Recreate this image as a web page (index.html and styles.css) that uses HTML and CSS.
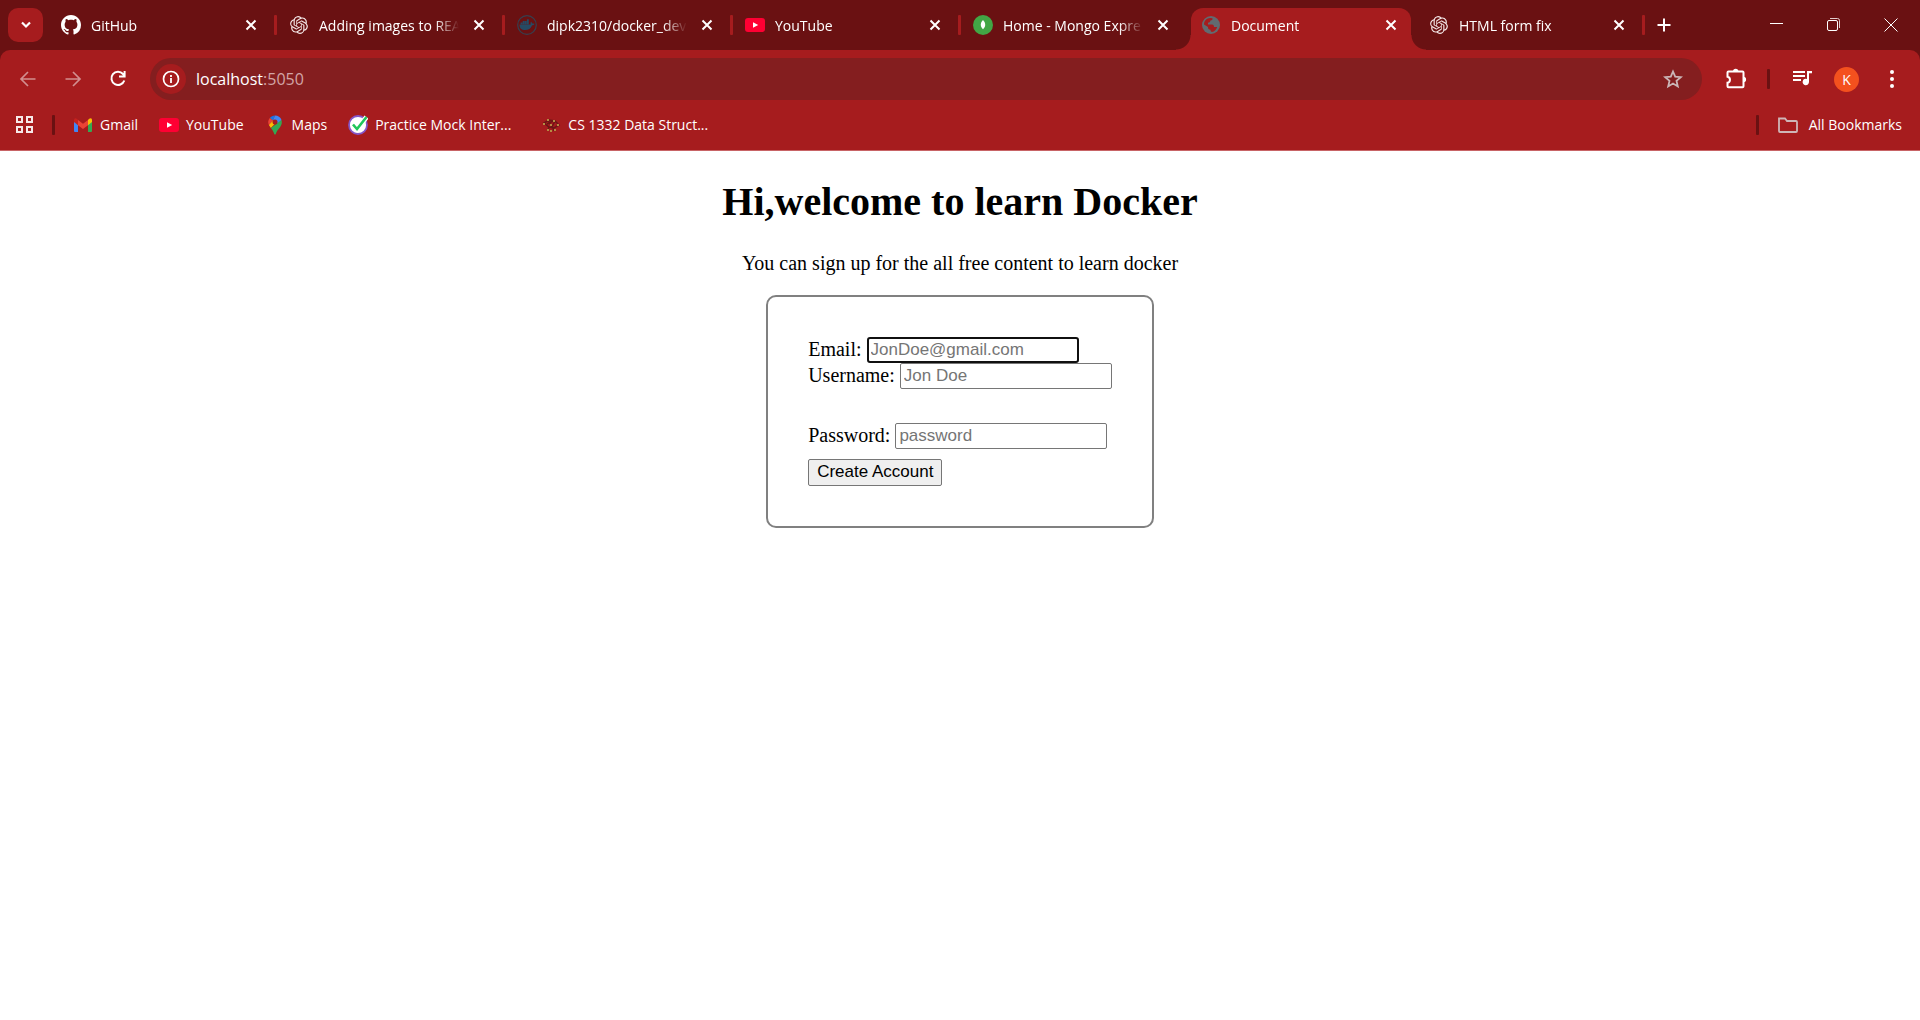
FILE: index.html
```html
<!DOCTYPE html>
<html lang="en">
<head>
<meta charset="utf-8">
<title>Document</title>
<link rel="stylesheet" href="styles.css">
</head>
<body>
<svg class="sprite" aria-hidden="true">
  <symbol id="close" viewBox="0 0 20 20"><path d="M5.500 5.500l9 9M14.500 5.500l-9 9" stroke="#fff" stroke-width="2"/></symbol>
  <symbol id="openai" viewBox="0 0 24 24"><path fill="#f3e6e6" d="M22.2819 9.8211a5.9847 5.9847 0 0 0-.5157-4.9108 6.0462 6.0462 0 0 0-6.5098-2.9A6.0651 6.0651 0 0 0 4.9807 4.1818a5.9847 5.9847 0 0 0-3.9977 2.9 6.0462 6.0462 0 0 0 .7427 7.0966 5.98 5.98 0 0 0 .511 4.9107 6.051 6.051 0 0 0 6.5146 2.9001A5.9847 5.9847 0 0 0 13.2599 24a6.0557 6.0557 0 0 0 5.7718-4.2058 5.9894 5.9894 0 0 0 3.9977-2.9001 6.0557 6.0557 0 0 0-.7475-7.0729zm-9.022 12.6081a4.4755 4.4755 0 0 1-2.8764-1.0408l.1419-.0804 4.7783-2.7582a.7948.7948 0 0 0 .3927-.6813v-6.7369l2.02 1.1686a.071.071 0 0 1 .038.052v5.5826a4.504 4.504 0 0 1-4.4945 4.4944zm-9.6607-4.1254a4.4708 4.4708 0 0 1-.5346-3.0137l.142.0852 4.783 2.7582a.7712.7712 0 0 0 .7806 0l5.8428-3.3685v2.3324a.0804.0804 0 0 1-.0332.0615L9.74 19.9502a4.4992 4.4992 0 0 1-6.1408-1.6464zM2.3408 7.8956a4.485 4.485 0 0 1 2.3655-1.9728V11.6a.7664.7664 0 0 0 .3879.6765l5.8144 3.3543-2.0201 1.1685a.0757.0757 0 0 1-.071 0l-4.8303-2.7865A4.504 4.504 0 0 1 2.3408 7.872zm16.5963 3.8558L13.1038 8.364 15.1192 7.2a.0757.0757 0 0 1 .071 0l4.8303 2.7913a4.4944 4.4944 0 0 1-.6765 8.1042v-5.6772a.79.79 0 0 0-.407-.667zm2.0107-3.0231l-.142-.0852-4.7735-2.7818a.7759.7759 0 0 0-.7854 0L9.409 9.2297V6.8974a.0662.0662 0 0 1 .0284-.0615l4.8303-2.7866a4.4992 4.4992 0 0 1 6.6802 4.66zM8.3065 12.863l-2.02-1.1638a.0804.0804 0 0 1-.038-.0567V6.0742a4.4992 4.4992 0 0 1 7.3757-3.4537l-.142.0805L8.704 5.459a.7948.7948 0 0 0-.3927.6813zm1.0976-2.3654l2.602-1.4998 2.6069 1.4998v2.9994l-2.5974 1.4997-2.6067-1.4997Z"/></symbol>
  <symbol id="youtube" viewBox="0 0 20 20"><rect y="3" width="20" height="14" rx="3" fill="#ff0033"/><path d="M8 7.200l5.200 2.800L8 12.800z" fill="#fff"/></symbol>
</svg>

<header class="browser">
  <div class="strip">
    <button class="tab-search" aria-label="Search tabs"><svg width="20" height="20" viewBox="0 0 20 20"><path d="M6 7.500l4 4 4-4" fill="none" stroke="#fff" stroke-width="2.200"/></svg></button>
    <div class="tabs">
      <div class="tab">
        <svg class="icon" viewBox="0 0 16 16"><path fill="#fff" d="M8 0C3.580 0 0 3.580 0 8c0 3.540 2.290 6.530 5.470 7.590.4.070.550-.170.550-.380 0-.190-.010-.820-.010-1.490-2.010.370-2.530-.490-2.690-.940-.090-.230-.480-.940-.820-1.130-.280-.150-.680-.520-.010-.530.630-.010 1.080.580 1.230.820.720 1.210 1.870.870 2.330.660.070-.520.280-.870.510-1.070-1.780-.2-3.640-.890-3.640-3.950 0-.870.310-1.590.820-2.150-.080-.2-.360-1.020.080-2.120 0 0 .670-.210 2.200.820.640-.180 1.320-.270 2-.270s1.360.090 2 .270c1.530-1.040 2.200-.820 2.200-.820.440 1.100.160 1.920.080 2.120.510.560.820 1.270.820 2.150 0 3.070-1.870 3.750-3.650 3.950.290.250.540.730.540 1.480 0 1.070-.010 1.930-.010 2.200 0 .210.150.460.550.380A8.010 8.010 0 0 0 16 8c0-4.420-3.580-8-8-8z"/></svg>
        <span class="title">GitHub</span>
        <button class="tab-close" aria-label="Close GitHub"><svg class="icon"><use href="#close"/></svg></button>
      </div>
      <span class="tab-sep"></span>
      <div class="tab">
        <svg class="icon" viewBox="-1.500 -1.500 27 27"><use href="#openai" width="24" height="24"/></svg>
        <span class="title">Adding images to REA</span>
        <button class="tab-close" aria-label="Close Adding images"><svg class="icon"><use href="#close"/></svg></button>
      </div>
      <span class="tab-sep"></span>
      <div class="tab">
        <svg class="icon" viewBox="0 0 20 20"><circle cx="10" cy="10" r="9.300" fill="none" stroke="#36404f" stroke-width="1.200"/><path fill="#264a64" d="M2.500 9.500h11.300c-.5-1.200-.3-2 .3-2.700.8.600 1 1.200 1 1.800.9-.1 1.700 0 2.400.4-.5.900-1.300 1.200-2.400 1.200-1.300 3.300-3.600 4.900-7 4.900-3.600 0-5.600-1.800-5.600-5.600zM3.600 7.600h1.900v1.600H3.600zm2.100 0h1.900v1.600H5.700zm2.100 0h1.900v1.600H7.800zm2.100 0h1.900v1.600H9.900zM5.700 5.900h1.900v1.500H5.700zm2.100 0h1.900v1.500H7.800zm2.100-1.700h1.900v3.200H9.900z"/></svg>
        <span class="title">dipk2310/docker_dev</span>
        <button class="tab-close" aria-label="Close docker_dev"><svg class="icon"><use href="#close"/></svg></button>
      </div>
      <span class="tab-sep"></span>
      <div class="tab">
        <svg class="icon"><use href="#youtube"/></svg>
        <span class="title">YouTube</span>
        <button class="tab-close" aria-label="Close YouTube"><svg class="icon"><use href="#close"/></svg></button>
      </div>
      <span class="tab-sep"></span>
      <div class="tab">
        <svg class="icon" viewBox="0 0 20 20"><circle cx="10" cy="10" r="10" fill="#42a645"/><path fill="#fff" d="M10 5c1.500 1.600 2.200 3 2.200 4.700 0 2-.9 3.300-2.200 4.600-1.300-1.300-2.200-2.600-2.200-4.600C7.800 8 8.500 6.600 10 5z"/></svg>
        <span class="title">Home - Mongo Expre</span>
        <button class="tab-close" aria-label="Close Mongo Express"><svg class="icon"><use href="#close"/></svg></button>
      </div>
      <span class="tab-sep hidden"></span>
      <div class="tab active">
        <svg class="icon" viewBox="0 0 20 20"><circle cx="10" cy="10" r="9" fill="#626a70"/><path fill="#a61c1e" d="M3 9.500C3 5.500 6 3.200 9 3l2.500.2c.2 1.500-.5 2.100-2 2.300-.4 1.700-1 2.200-2.500 2.200V9.500h4c1.500 0 2 1 2 2.500h3.200c-.7 2.700-2.700 4.500-5.200 5-1-.2-1.500-1-1.500-2.300-2 0-2.500-1-2.500-2.700z"/></svg>
        <span class="title">Document</span>
        <button class="tab-close" aria-label="Close Document"><svg class="icon"><use href="#close"/></svg></button>
      </div>
      <span class="tab-sep hidden"></span>
      <div class="tab">
        <svg class="icon" viewBox="-1.500 -1.500 27 27"><use href="#openai" width="24" height="24"/></svg>
        <span class="title">HTML form fix</span>
        <button class="tab-close" aria-label="Close HTML form fix"><svg class="icon"><use href="#close"/></svg></button>
      </div>
      <span class="tab-sep"></span>
    </div>
    <button class="new-tab" aria-label="New tab"><svg width="20" height="20" viewBox="0 0 20 20"><path d="M10 3.500v13M3.500 10h13" stroke="#fff" stroke-width="2"/></svg></button>
    <div class="window-buttons">
      <button aria-label="Minimize"><svg class="icon" viewBox="0 0 20 20"><path d="M3 8.500h13" stroke="#fff"/></svg></button>
      <button aria-label="Restore"><svg class="icon" viewBox="0 0 20 20"><rect x="3.500" y="5.500" width="10" height="10" rx="1.500" fill="none" stroke="#fff"/><path d="M6 3.500h7.500a2 2 0 0 1 2 2V13" fill="none" stroke="#e3cccc"/></svg></button>
      <button aria-label="Close window"><svg class="icon" viewBox="0 0 20 20"><path d="M3.500 3.500l13 13M16.500 3.500l-13 13" stroke="#fff"/></svg></button>
    </div>
  </div>

  <div class="panel">
    <div class="toolbar">
      <div class="nav">
        <button aria-label="Back"><svg class="icon" viewBox="0 0 20 20"><path d="M17.500 10H3.500M10 3L3 10l7 7" fill="none" stroke="#d28e8f" stroke-width="1.700"/></svg></button>
        <button aria-label="Forward"><svg class="icon" viewBox="0 0 20 20"><path d="M2.500 10h14M10 3l7 7-7 7" fill="none" stroke="#d28e8f" stroke-width="1.700"/></svg></button>
        <button aria-label="Reload"><svg class="icon" viewBox="0 0 20 20"><path d="M16.300 11.500A6.600 6.600 0 1 1 15 5l1.500 1.800M16.600 2v5.600H11" fill="none" stroke="#fff" stroke-width="2"/></svg></button>
      </div>
      <div class="omnibox">
        <button class="site-info" aria-label="Site information"><svg class="icon" viewBox="0 0 20 20"><circle cx="10" cy="10" r="7.500" fill="none" stroke="#fff" stroke-width="1.700"/><path d="M10 9v5M10 6v2" stroke="#fff" stroke-width="1.800"/></svg></button>
        <span class="url">localhost<span class="port">:5050</span></span>
        <button class="star" aria-label="Bookmark this tab"><svg class="icon" viewBox="0 0 20 20"><path d="M10 2.500l2.200 5.200 5.600.5-4.300 3.700 1.300 5.500-4.800-2.900-4.800 2.900 1.300-5.500-4.300-3.700 5.600-.5z" fill="none" stroke="#cbb6b7" stroke-width="1.800"/></svg></button>
      </div>
      <div class="actions">
        <button aria-label="Extensions"><svg width="24" height="24" viewBox="0 0 24 24"><path d="M4.500 4.500h14q1 0 1 1v13.800q0 1-1 1h-14q-1 0-1-1v-3.600c3.300-.5 3.300-5.500 0-6V5.500q0-1 1-1z" fill="none" stroke="#fff" stroke-width="2"/><path d="M9 4.500a2.700 2.700 0 0 1 5.400 0M19.500 9.800a2.600 2.600 0 0 1 0 5.200" fill="#fff"/></svg></button>
        <span class="bar"></span>
        <button aria-label="Media controls"><svg width="24" height="24" viewBox="0 0 24 24"><path d="M3 5h12M3 9h12M3 13h8" stroke="#fff" stroke-width="2"/><path d="M22 4v2.200h-3V15a3.200 3.200 0 1 1-2-3V4z" fill="#fff"/></svg></button>
        <button aria-label="Profile"><span class="avatar">K</span></button>
        <button aria-label="Menu"><svg class="icon" viewBox="0 0 20 20"><g fill="#fff"><circle cx="10" cy="3" r="2"/><circle cx="10" cy="10" r="2"/><circle cx="10" cy="17" r="2"/></g></svg></button>
      </div>
    </div>

    <nav class="bookmarks">
      <button class="apps" aria-label="Apps"><svg class="icon" viewBox="0 0 20 20"><path d="M2 2h5v5H2zM12 2h5v5h-5zM2 12h5v5H2zM12 12h5v5h-5z" fill="none" stroke="#f6e8e8" stroke-width="2"/></svg></button>
      <span class="bar"></span>
      <a href="#"><svg class="icon" viewBox="0 0 20 20"><path d="M1 6v10q0 1 1 1h3V8z" fill="#4285f4"/><path d="M19 6v10q0 1-1 1h-3V8z" fill="#34a853"/><path d="M15 5l1.200-1.200Q19 2.500 19 5v2l-4 3.200z" fill="#fbbc04"/><path d="M1 5q.2-2.500 2.800-1.200L5 5v5.200L1 7z" fill="#c5221f"/><path d="M5 5l5 3.800L15 5v5.200L10 14 5 10.200z" fill="#ea4335"/></svg>Gmail</a>
      <a href="#"><svg class="icon"><use href="#youtube"/></svg>YouTube</a>
      <a href="#"><svg class="icon" viewBox="0 0 20 20"><path d="M10 .5c-2.100 0-4 .9-5.200 2.400L8 5.600z" fill="#1a73e8"/><path d="M4.800 2.900A6.700 6.700 0 0 0 3.900 10L8 5.600z" fill="#ea4335"/><path d="M10 .5L8 5.600l4.500 3.600 4-4.200C15.500 2.200 13 .5 10 .5z" fill="#4285f4"/><path d="M3.900 10c.6 1.200 1.300 2 2 2.900l6.600-7L8 5.600z" fill="#fbbc04"/><path d="M16.500 5c.8 3 .1 5-1.500 7.200-2 2.500-3.500 4-4.200 6.800q-.8 1-1.600 0c-.5-2.200-1.700-4-3.300-6.100z" fill="#34a853"/><circle cx="10" cy="7" r="2.500" fill="#a61c1e"/></svg>Maps</a>
      <a href="#"><svg class="icon" viewBox="0 0 20 20"><circle cx="10" cy="10" r="9" fill="#fff" stroke="#8555c7" stroke-width="1.800"/><path d="M5 9.500l4 4.500 9.500-12" fill="none" stroke="#fff" stroke-width="5"/><path d="M5 9.500l4 4.500L18.500 2" fill="none" stroke="#1fc65b" stroke-width="2.600"/></svg>Practice Mock Inter...</a>
      <a class="after-long" href="#"><svg class="icon" viewBox="0 0 20 20"><path d="M3 8l5-3 6 1 4 4-5 3-5-1zM6 9l6-3M7 5l4 7 3-6M8 12l-1 3M12 13l1 3" fill="none" stroke="#6d1516" stroke-width="1.500"/><g fill="#b58b43"><rect x="2" y="8" width="2" height="2"/><rect x="6" y="4" width="2" height="2"/><rect x="12" y="5" width="2" height="2"/><rect x="16" y="9" width="2" height="2"/><rect x="6" y="14" width="2" height="2"/><rect x="9" y="15" width="2" height="2"/><rect x="13" y="14" width="2" height="2"/><rect x="9" y="9" width="2" height="2"/></g></svg>CS 1332 Data Struct...</a>
      <span class="bar push"></span>
      <a class="all" href="#"><svg width="22" height="20" viewBox="0 0 22 20"><path d="M2 3.500h6l2 2.500h9q1 0 1 1v9q0 1-1 1H3q-1 0-1-1z" fill="none" stroke="#cfb6b7" stroke-width="1.800"/></svg>All Bookmarks</a>
    </nav>
  </div>
</header>

<main class="page">
  <h1>Hi,welcome to learn Docker</h1>
  <p>You can sign up for the all free content to learn docker</p>
  <form class="signup">
    <div class="row"><label for="email">Email:</label><input class="focused" id="email" type="email" placeholder="JonDoe@gmail.com"></div>
    <div class="row"><label for="username">Username:</label><input id="username" type="text" placeholder="Jon Doe"></div>
    <div class="row spaced"><label for="password">Password:</label><input id="password" type="password" placeholder="password"></div>
    <button class="submit" type="button">Create Account</button>
  </form>
</main>
</body>
</html>
```
FILE: styles.css
```css
* { box-sizing: border-box; }

body {
  margin: 0;
  background: #fff;
  color: #000;
  font-family: "Liberation Serif", "Times New Roman", serif;
  font-size: 20px;
}

.sprite { position: absolute; width: 0; height: 0; }

svg { display: block; flex: none; }

.icon { width: 20px; height: 20px; }

/* Browser chrome */
.browser {
  background: #6a1112;
  color: #fff;
  font-family: "Segoe UI", "Open Sans", sans-serif;
  font-size: 14px;
  line-height: 20px;
}

.browser button {
  display: flex;
  align-items: center;
  justify-content: center;
  flex: none;
  padding: 0;
  border: 0;
  background: none;
  color: inherit;
  font: inherit;
}

.strip {
  display: flex;
  align-items: center;
  height: 50px;
  padding-left: 8px;
}

.browser .tab-search {
  width: 35px;
  height: 34px;
  border-radius: 10px;
  background: #a61c1e;
}

.tabs {
  display: flex;
  align-items: center;
  min-width: 0;
  height: 50px;
  margin-left: 8px;
}

.tab {
  display: flex;
  align-items: center;
  flex: 0 1 220px;
  width: 220px;
  min-width: 0;
  height: 42px;
  gap: 10px;
  padding: 0 10px;
}

.title {
  flex: 1;
  min-width: 0;
  padding-top: 1px;
  overflow: hidden;
  white-space: nowrap;
  mask-image: linear-gradient(to right, #000 calc(100% - 24px), transparent);
}

.tab-sep {
  flex: none;
  width: 3px;
  height: 20px;
  margin: 0 2px 0 3px;
  border-radius: 1px;
  background: #a61c1e;
}

.tab-sep.hidden { background: none; }

.active {
  position: relative;
  align-self: flex-end;
  border-radius: 12px 12px 0 0;
  background: #a61c1e;
  padding-bottom: 8px;
}

.active::before,
.active::after {
  content: "";
  position: absolute;
  bottom: 0;
  width: 15px;
  height: 15px;
}

.active::before {
  right: 100%;
  background: radial-gradient(circle at 0 0, transparent 14px, #a61c1e 15px);
}

.active::after {
  left: 100%;
  background: radial-gradient(circle at 100% 0, transparent 14px, #a61c1e 15px);
}

.browser .new-tab { width: 32px; height: 32px; margin-left: 1px; }

.window-buttons {
  display: flex;
  margin-left: auto;
  padding-right: 1px;
}

.window-buttons button { width: 57px; height: 50px; }

.panel {
  border-bottom: 1px solid #c86466;
  border-radius: 10px 10px 0 0;
  background: #a61c1e;
}

.toolbar {
  display: flex;
  align-items: center;
  padding: 8px 6px 0 5px;
}

.nav { display: flex; margin-right: 10px; }

.nav button { width: 45px; height: 42px; }

.omnibox {
  display: flex;
  align-items: center;
  flex: 1;
  height: 42px;
  padding: 0 14px 0 6px;
  border-radius: 21px;
  background: #841e1f;
}

.omnibox .site-info {
  width: 30px;
  height: 30px;
  border-radius: 50%;
  background: #a61c1e;
}

.url {
  flex: 1;
  margin-left: 10px;
  font-size: 16px;
}

.port { color: #d2a5a6; }

.browser .star { width: 30px; height: 30px; }

.actions { display: flex; align-items: center; margin-left: 11px; }

.actions button { width: 45px; height: 42px; }

.bar {
  flex: none;
  width: 3px;
  height: 20px;
  border-radius: 1px;
  background: #6a1112;
}

.actions .bar { margin: 0 9px; }

.avatar {
  width: 25px;
  height: 25px;
  border-radius: 50%;
  background: #f4511e;
  line-height: 25px;
  text-align: center;
}

.bookmarks {
  display: flex;
  align-items: center;
  height: 50px;
  padding: 0 18px 0 15px;
}

.apps { margin-right: 17px; }

.bookmarks a {
  display: flex;
  align-items: center;
  gap: 7px;
  margin-left: 21px;
  color: #fff;
  text-decoration: none;
  white-space: nowrap;
}

.bookmarks .bar + a { margin-left: 18px; }

.bookmarks .after-long { margin-left: 30px; }

.push { margin-left: auto; }

.bookmarks .all { gap: 10px; }

/* Sign-up page */
.page {
  display: flex;
  flex-direction: column;
  align-items: center;
  padding: 28px 10px 10px;
}

h1 {
  margin: 0 0 26px;
  font-size: 40px;
  line-height: 46px;
}

p { margin: 0 0 20px; line-height: 24px; }

.signup {
  padding: 40px;
  border: 2px solid #808080;
  border-radius: 10px;
}

.row {
  display: flex;
  height: 26px;
  gap: 5px;
}

.row label { line-height: 24px; }

.spaced { margin: 34px 0 10px; }

.signup input,
.submit {
  height: 26px;
  margin: 0;
  border: 1px solid #767676;
  border-radius: 2px;
  font-family: "Liberation Sans", Arial, sans-serif;
  font-size: 17px;
}

.signup input {
  width: 212px;
  padding: 0 3px;
  background: #fff;
  outline: none;
}

.signup input::placeholder { color: #757575; }

.signup .focused {
  border: 2px solid #101010;
  border-radius: 3px;
  padding: 0 2px;
}

.submit {
  display: block;
  height: 27px;
  padding: 0 8px 2px;
  background: #efefef;
  color: #000;
}
```
